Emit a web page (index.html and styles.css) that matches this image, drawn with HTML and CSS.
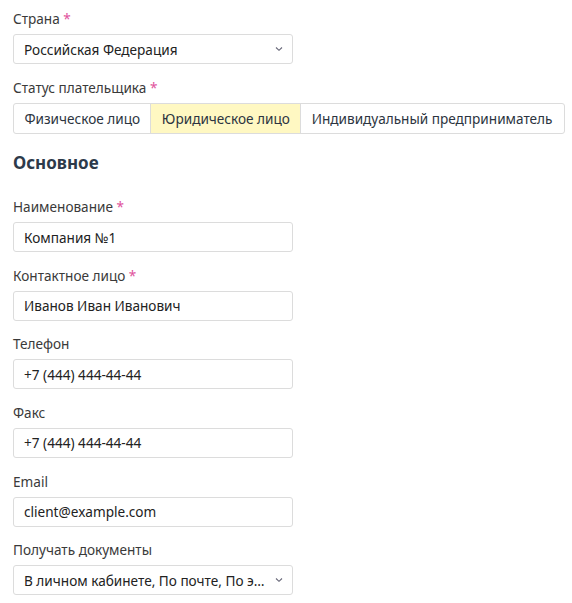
FILE: index.html
```html
<!DOCTYPE html>
<html lang="ru">
<head>
<meta charset="utf-8">
<link rel="stylesheet" href="styles.css">
</head>
<body>
<form class="form">
  <div class="field">
    <label class="label">Страна <span class="req">*</span></label>
    <div class="input select"><span class="value">Российская Федерация</span>
      <svg class="chev" width="8" height="6" viewBox="0 0 8 6"><path d="M1 1.5 L4 4.3 L7 1.5" fill="none" stroke="#667" stroke-width="1.1"/></svg>
    </div>
  </div>
  <div class="field">
    <label class="label">Статус плательщика <span class="req">*</span></label>
    <div class="segmented">
      <span class="seg">Физическое лицо</span>
      <span class="seg active">Юридическое лицо</span>
      <span class="seg">Индивидуальный предприниматель</span>
    </div>
  </div>
  <h2 class="heading">Основное</h2>
  <div class="field">
    <label class="label">Наименование <span class="req">*</span></label>
    <div class="input"><span class="value">Компания №1</span></div>
  </div>
  <div class="field">
    <label class="label">Контактное лицо <span class="req">*</span></label>
    <div class="input"><span class="value">Иванов Иван Иванович</span></div>
  </div>
  <div class="field">
    <label class="label">Телефон</label>
    <div class="input"><span class="value">+7 (444) 444-44-44</span></div>
  </div>
  <div class="field">
    <label class="label">Факс</label>
    <div class="input"><span class="value">+7 (444) 444-44-44</span></div>
  </div>
  <div class="field">
    <label class="label">Email</label>
    <div class="input"><span class="value">client@example.com</span></div>
  </div>
  <div class="field">
    <label class="label">Получать документы</label>
    <div class="input select"><span class="value">В личном кабинете, По почте, По э…</span>
      <svg class="chev" width="8" height="6" viewBox="0 0 8 6"><path d="M1 1.5 L4 4.3 L7 1.5" fill="none" stroke="#667" stroke-width="1.1"/></svg>
    </div>
  </div>
</form>
</body>
</html>
```
FILE: styles.css
```css
* { box-sizing: border-box; }
html, body { margin: 0; background: #fff; }
body {
  padding: 9px 13px;
  font-family: "Noto Sans", "DejaVu Sans", sans-serif;
  font-size: 13.6px;
  color: #333;
}
.form { display: flex; flex-direction: column; }
.field { display: flex; flex-direction: column; margin-bottom: 13.6px; }
.label { line-height: 20px; margin-bottom: 5px; color: #3a3a3a; }
.req { color: #e0529c; }
.input {
  width: 280px;
  height: 30px;
  border: 1px solid #dcdcdc;
  border-radius: 3px;
  display: flex;
  align-items: center;
  padding: 0 10px;
  color: #222;
}
.value { flex: 1; white-space: nowrap; overflow: hidden; }
.select { padding-right: 9px; }
.chev { flex: none; margin-left: 8px; }
.segmented {
  display: flex;
  width: 552px;
  height: 31px;
  border: 1px solid #dcdcdc;
  border-radius: 3px;
  overflow: hidden;
}
.seg {
  display: flex;
  align-items: center;
  padding: 0 10.4px;
  white-space: nowrap;
  color: #2c3440;
}
.seg + .seg { border-left: 1px solid #dcdcdc; }
.seg.active { background: #fff8c2; }
.seg:last-child { flex: 1; }
.heading {
  margin: 4px 0 22px;
  font-size: 17px;
  font-weight: 700;
  line-height: 24px;
  color: #2d3a4a;
}
```
